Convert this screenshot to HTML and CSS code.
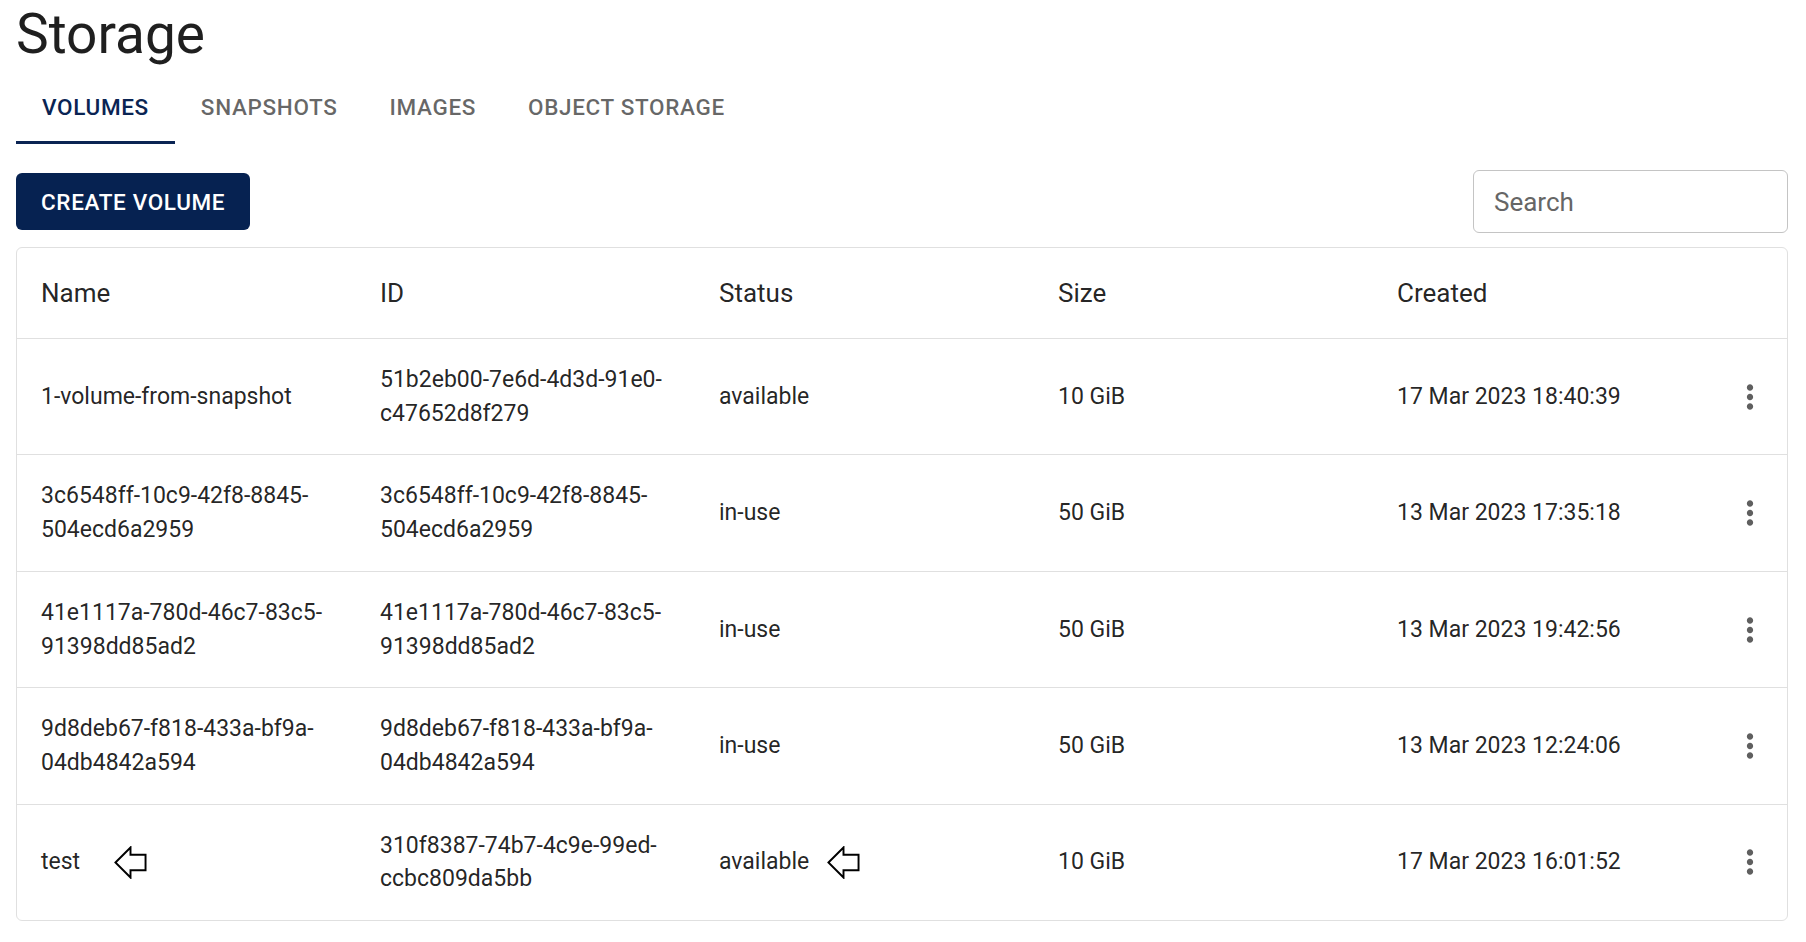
FILE: index.html
```html
<!DOCTYPE html>
<html lang="en">
<head>
    <meta charset="UTF-8">
    <meta name="viewport" content="width=device-width, initial-scale=1.0">
    <title>Storage</title>
    <link rel="stylesheet" href="styles.css">
</head>
<body>
    <div class="page">
        <h1 class="page-title">Storage</h1>

        <nav class="tabs">
            <a class="tab tab-active" href="#">Volumes</a>
            <a class="tab" href="#">Snapshots</a>
            <a class="tab" href="#">Images</a>
            <a class="tab" href="#">Object Storage</a>
        </nav>

        <div class="toolbar">
            <button type="button" class="primary-button">Create volume</button>
            <input type="text" class="search-input" placeholder="Search">
        </div>

        <div class="table-card">
            <table class="volume-table">
                <colgroup>
                    <col class="col-data">
                    <col class="col-data">
                    <col class="col-data">
                    <col class="col-data">
                    <col class="col-data">
                    <col>
                </colgroup>
                <thead>
                    <tr>
                        <th>Name</th>
                        <th>ID</th>
                        <th>Status</th>
                        <th>Size</th>
                        <th>Created</th>
                        <th></th>
                    </tr>
                </thead>
                <tbody>
                    <tr>
                        <td>1-volume-from-snapshot</td>
                        <td>51b2eb00-7e6d-4d3d-91e0-c47652d8f279</td>
                        <td>available</td>
                        <td>10 GiB</td>
                        <td>17 Mar 2023 18:40:39</td>
                        <td class="actions-cell"><svg class="more-icon" viewBox="0 0 24 24"><path d="M12 8c1.1 0 2-.9 2-2s-.9-2-2-2-2 .9-2 2 .9 2 2 2zm0 2c-1.1 0-2 .9-2 2s.9 2 2 2 2-.9 2-2-.9-2-2-2zm0 6c-1.1 0-2 .9-2 2s.9 2 2 2 2-.9 2-2-.9-2-2-2z"/></svg></td>
                    </tr>
                    <tr>
                        <td>3c6548ff-10c9-42f8-8845-504ecd6a2959</td>
                        <td>3c6548ff-10c9-42f8-8845-504ecd6a2959</td>
                        <td>in-use</td>
                        <td>50 GiB</td>
                        <td>13 Mar 2023 17:35:18</td>
                        <td class="actions-cell"><svg class="more-icon" viewBox="0 0 24 24"><path d="M12 8c1.1 0 2-.9 2-2s-.9-2-2-2-2 .9-2 2 .9 2 2 2zm0 2c-1.1 0-2 .9-2 2s.9 2 2 2 2-.9 2-2-.9-2-2-2zm0 6c-1.1 0-2 .9-2 2s.9 2 2 2 2-.9 2-2-.9-2-2-2z"/></svg></td>
                    </tr>
                    <tr>
                        <td>41e1117a-780d-46c7-83c5-91398dd85ad2</td>
                        <td>41e1117a-780d-46c7-83c5-91398dd85ad2</td>
                        <td>in-use</td>
                        <td>50 GiB</td>
                        <td>13 Mar 2023 19:42:56</td>
                        <td class="actions-cell"><svg class="more-icon" viewBox="0 0 24 24"><path d="M12 8c1.1 0 2-.9 2-2s-.9-2-2-2-2 .9-2 2 .9 2 2 2zm0 2c-1.1 0-2 .9-2 2s.9 2 2 2 2-.9 2-2-.9-2-2-2zm0 6c-1.1 0-2 .9-2 2s.9 2 2 2 2-.9 2-2-.9-2-2-2z"/></svg></td>
                    </tr>
                    <tr>
                        <td>9d8deb67-f818-433a-bf9a-04db4842a594</td>
                        <td>9d8deb67-f818-433a-bf9a-04db4842a594</td>
                        <td>in-use</td>
                        <td>50 GiB</td>
                        <td>13 Mar 2023 12:24:06</td>
                        <td class="actions-cell"><svg class="more-icon" viewBox="0 0 24 24"><path d="M12 8c1.1 0 2-.9 2-2s-.9-2-2-2-2 .9-2 2 .9 2 2 2zm0 2c-1.1 0-2 .9-2 2s.9 2 2 2 2-.9 2-2-.9-2-2-2zm0 6c-1.1 0-2 .9-2 2s.9 2 2 2 2-.9 2-2-.9-2-2-2z"/></svg></td>
                    </tr>
                    <tr>
                        <td><span class="cell-with-mark">test<svg class="mark-arrow mark-name" viewBox="0 0 34 34"><polygon points="1.5,17 17,1.5 17,9 32.5,9 32.5,25 17,25 17,32.5"/></svg></span></td>
                        <td>310f8387-74b7-4c9e-99ed-ccbc809da5bb</td>
                        <td><span class="cell-with-mark">available<svg class="mark-arrow mark-status" viewBox="0 0 34 34"><polygon points="1.5,17 17,1.5 17,9 32.5,9 32.5,25 17,25 17,32.5"/></svg></span></td>
                        <td>10 GiB</td>
                        <td>17 Mar 2023 16:01:52</td>
                        <td class="actions-cell"><svg class="more-icon" viewBox="0 0 24 24"><path d="M12 8c1.1 0 2-.9 2-2s-.9-2-2-2-2 .9-2 2 .9 2 2 2zm0 2c-1.1 0-2 .9-2 2s.9 2 2 2 2-.9 2-2-.9-2-2-2zm0 6c-1.1 0-2 .9-2 2s.9 2 2 2 2-.9 2-2-.9-2-2-2z"/></svg></td>
                    </tr>
                </tbody>
            </table>
        </div>
    </div>
</body>
</html>
```

FILE: styles.css
```css
body {
    margin: 0;
    font-family: Roboto, 'Liberation Sans', Arial, sans-serif;
    color: rgba(0, 0, 0, 0.87);
    background-color: #ffffff;
}
.page {
    padding: 4px 18px 0 16px;
}
.page-title {
    margin: 0;
    font-size: 55px;
    font-weight: 400;
    line-height: 60px;
    color: #1f1f1f;
}

/* tabs */
.tabs {
    display: flex;
    margin-top: 8px;
}
.tab {
    display: flex;
    align-items: center;
    justify-content: center;
    box-sizing: border-box;
    height: 72px;
    min-width: 135px;
    padding: 0 26px;
    border-bottom: 3px solid transparent;
    font-size: 22.5px;
    font-weight: 500;
    letter-spacing: 0.65px;
    text-transform: uppercase;
    text-decoration: none;
    color: rgba(0, 0, 0, 0.6);
}
.tab-active {
    color: #0a2453;
    border-bottom-color: #0a2453;
}

/* toolbar */
.toolbar {
    display: flex;
    justify-content: space-between;
    align-items: center;
    margin-top: 26px;
    height: 63px;
}
.primary-button {
    height: 57px;
    padding: 0 25px;
    background-color: #062251;
    color: #ffffff;
    border: none;
    border-radius: 6px;
    font-family: Roboto, 'Liberation Sans', Arial, sans-serif;
    font-size: 22.5px;
    font-weight: 500;
    letter-spacing: 0.65px;
    text-transform: uppercase;
    cursor: pointer;
}
.search-input {
    box-sizing: border-box;
    width: 315px;
    height: 63px;
    padding: 0 20px;
    border: 1px solid #c4c4c4;
    border-radius: 6px;
    font-family: Roboto, 'Liberation Sans', Arial, sans-serif;
    font-size: 26px;
    color: rgba(0, 0, 0, 0.87);
    outline: none;
}
.search-input::placeholder {
    color: #666666;
    opacity: 1;
}

/* table */
.table-card {
    margin-top: 14px;
    border: 1px solid #e0e0e0;
    border-radius: 6px;
    overflow: hidden;
}
.volume-table {
    width: 100%;
    border-collapse: collapse;
    table-layout: fixed;
}
.col-data {
    width: 339px;
}
.volume-table th,
.volume-table td {
    text-align: left;
    vertical-align: middle;
    font-weight: 400;
    border-bottom: 1px solid #e0e0e0;
}
.volume-table th {
    padding: 28px 24px;
    font-size: 26px;
    line-height: 34px;
}
.volume-table td {
    padding: 24px;
    font-size: 23px;
    line-height: 33.7px;
}
.volume-table tbody tr:last-child td {
    border-bottom: none;
}
.volume-table td.actions-cell {
    padding: 0;
    text-align: center;
}
.more-icon {
    display: block;
    width: 38px;
    height: 38px;
    margin: 0 auto;
    fill: #5f5f5f;
}
.cell-with-mark {
    display: inline-flex;
    align-items: center;
}
.mark-arrow {
    width: 33px;
    height: 33px;
    fill: none;
    stroke: #000000;
    stroke-width: 2;
    stroke-linejoin: miter;
}
.mark-name {
    margin-left: 34px;
}
.mark-status {
    margin-left: 18px;
}
```
